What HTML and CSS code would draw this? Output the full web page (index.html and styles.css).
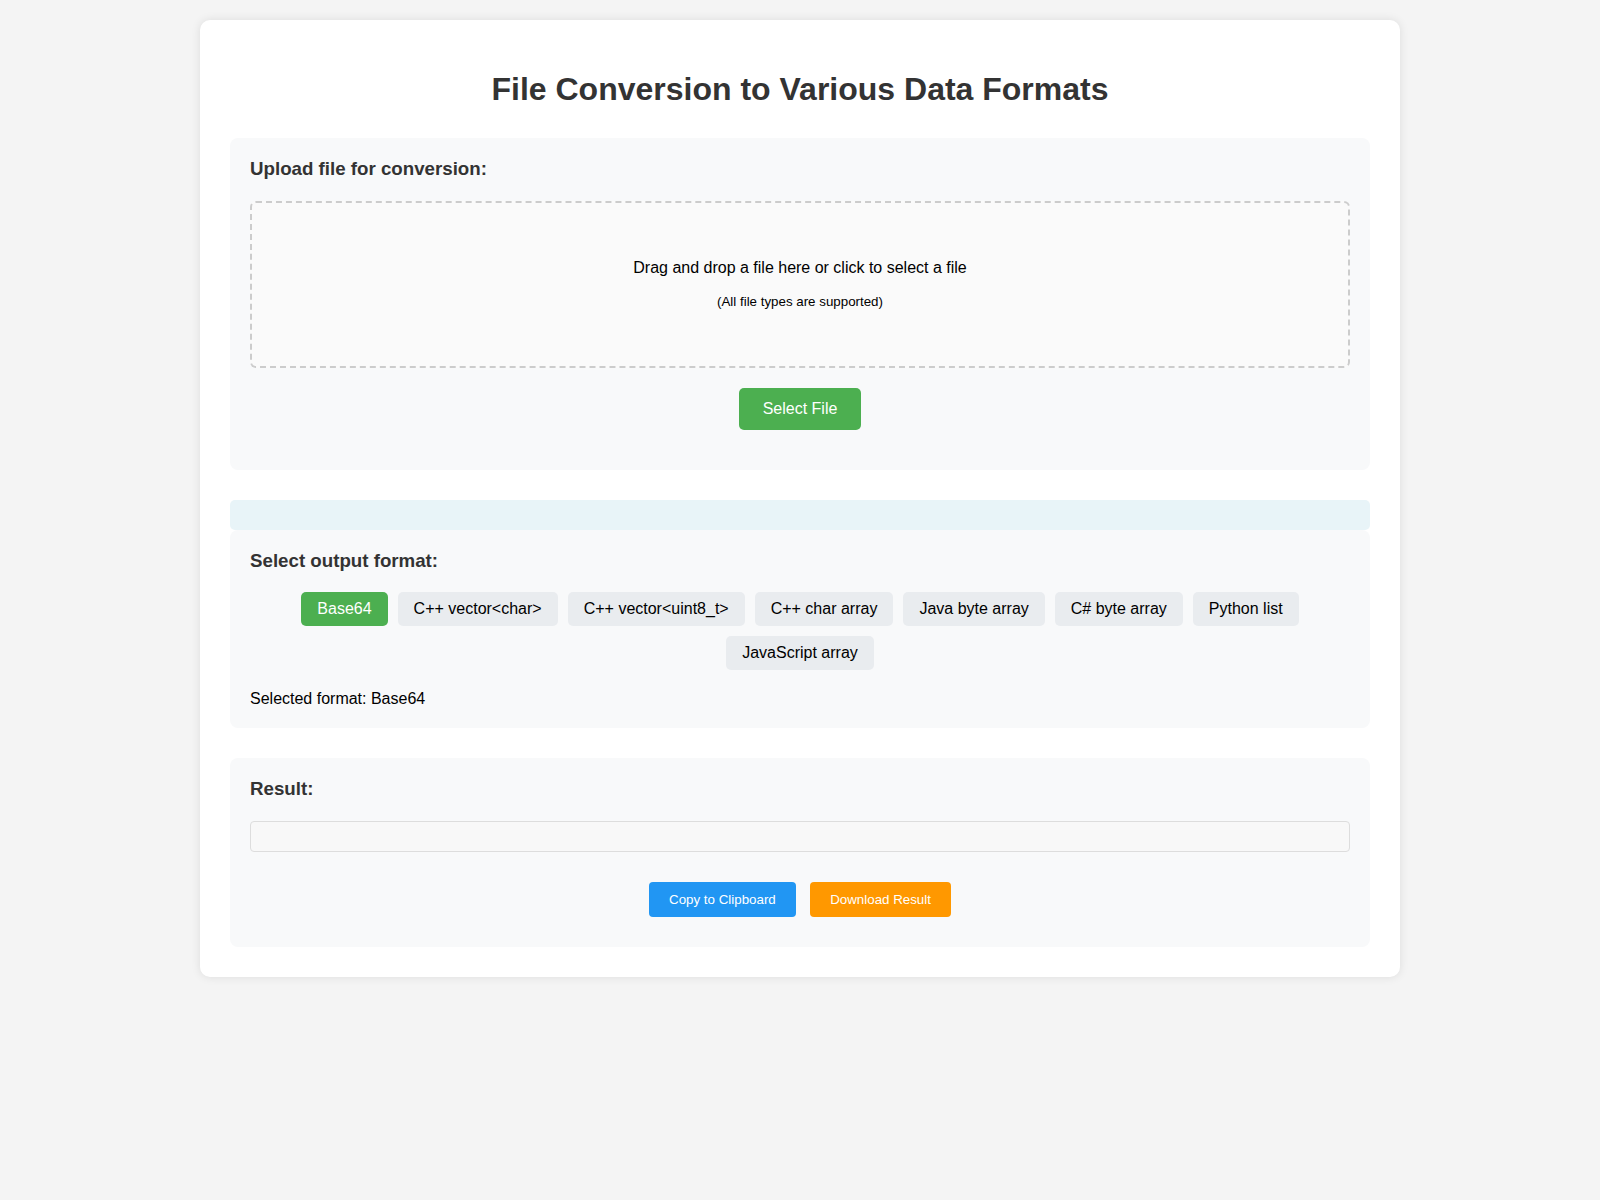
FILE: index.html
```html
<!DOCTYPE html>
<html lang="en">
<head>
  <meta charset="UTF-8" />
  <meta name="viewport" content="width=device-width, initial-scale=1.0"/>
  <title>File Conversion to Various Data Formats</title>
  <link rel="stylesheet" href="styles.css">
</head>
<body>
  <div class="container">
    <h1>File Conversion to Various Data Formats</h1>

    <!-- Upload -->
    <section class="section upload-section">
      <h3>Upload file for conversion:</h3>
      <div class="drop-zone" id="dropZone">
        <p>Drag and drop a file here or click to select a file</p>
        <p><small>(All file types are supported)</small></p>
      </div>
      <input type="file" id="fileInput" class="hidden">
      <div class="select-row">
        <button class="btn-select" id="selectBtn">Select File</button>
      </div>
    </section>

    <div class="file-info" id="fileInfo"></div>

    <!-- Formats -->
    <section class="section format-section">
      <h3>Select output format:</h3>
      <div class="format-buttons" id="formatButtons">
        <button class="format-btn active">Base64</button>
        <button class="format-btn">C++ vector&lt;char&gt;</button>
        <button class="format-btn">C++ vector&lt;uint8_t&gt;</button>
        <button class="format-btn">C++ char array</button>
        <button class="format-btn">Java byte array</button>
        <button class="format-btn">C# byte array</button>
        <button class="format-btn">Python list</button>
        <button class="format-btn">JavaScript array</button>
      </div>
      <p class="selected-format" id="selectedFormat">Selected format: Base64</p>
    </section>

    <!-- Result -->
    <section class="section result-section">
      <h3>Result:</h3>
      <div class="result-box" id="result"></div>
      <div class="action-row">
        <button class="btn-copy">Copy to Clipboard</button>
        <button class="btn-download">Download Result</button>
      </div>
    </section>
  </div>
</body>
</html>
```

FILE: styles.css
```css
body {
  font-family: "Liberation Sans", Arial, sans-serif;
  margin: 0;
  padding: 20px;
  background: #f4f4f4;
  color: #000;
}
.container {
  max-width: 1200px;
  margin: 0 auto;
  padding: 30px;
  box-sizing: border-box;
  background: white;
  border-radius: 10px;
  box-shadow: 0 0 10px rgba(0, 0, 0, 0.1);
}
h1 {
  text-align: center;
  color: #333;
  font-size: 32px;
  margin: 21px 0 30px;
}
.section {
  background: #f8f9fa;
  border-radius: 8px;
  padding: 20px;
}
.section h3 {
  margin: 0 0 21px;
  font-size: 1.17em;
  color: #333;
}
.upload-section {
  margin-bottom: 30px;
}
.result-section {
  margin-top: 30px;
}
.hidden {
  display: none;
}
.drop-zone {
  border: 2px dashed #ccc;
  border-radius: 6px;
  background: #fafafa;
  padding: 41px 40px;
  text-align: center;
  cursor: pointer;
}
.drop-zone p {
  margin: 15px 0;
}
.select-row {
  text-align: center;
  margin: 20px 0;
}
button {
  font-family: inherit;
  border: none;
  cursor: pointer;
}
.btn-select {
  background: #4CAF50;
  color: white;
  font-size: 16px;
  padding: 12px 24px;
  border-radius: 5px;
}
.file-info {
  background: #e8f4f8;
  border-radius: 5px;
  padding: 15px;
}
.format-section h3 {
  margin-bottom: 20px;
}
.format-buttons {
  display: flex;
  flex-wrap: wrap;
  justify-content: center;
  gap: 10px;
}
.format-btn {
  font-size: 16px;
  padding: 8px 16px;
  background: #e9ecef;
  color: #000;
  border-radius: 5px;
}
.format-btn.active {
  background: #4CAF50;
  color: white;
}
.selected-format {
  margin: 20px 0 0;
}
.result-box {
  min-height: 29px;
  border: 1px solid #ddd;
  border-radius: 4px;
  background: #f8f8f8;
}
.action-row {
  text-align: center;
  margin: 30px 0 10px;
}
.action-row button {
  font-size: 13.333px;
  padding: 10px 20px;
  margin: 0 5px;
  color: white;
  border-radius: 4px;
}
.btn-copy {
  background: #2196F3;
}
.btn-download {
  background: #FF9800;
}
```
